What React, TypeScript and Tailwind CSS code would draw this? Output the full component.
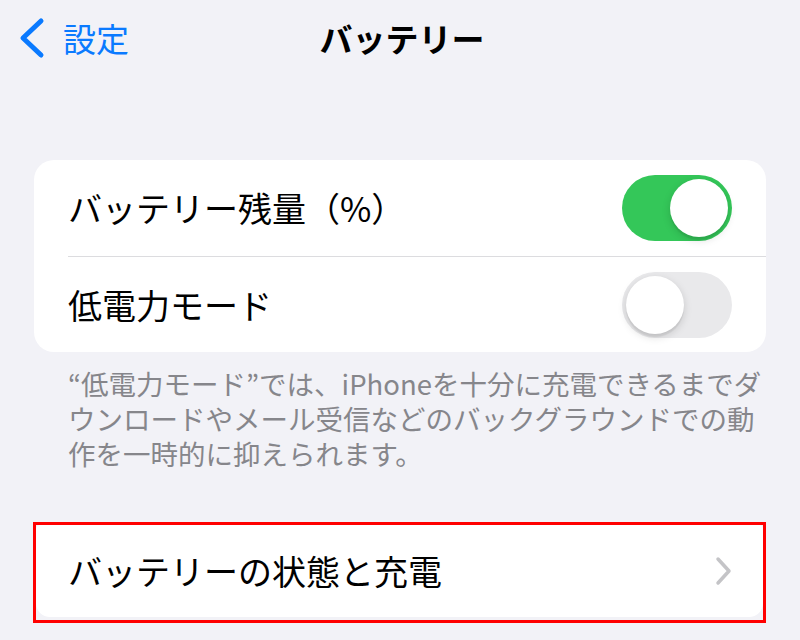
import React from "react";

const font = { fontFamily: '"Noto Sans CJK JP", "Noto Sans", sans-serif' };

function Toggle({ on }: { on: boolean }) {
  return (
    <div
      className={`relative w-[110px] h-[66px] rounded-full ${on ? "bg-[#34c759]" : "bg-[#e9e9eb]"}`}
    >
      <div
        className={`absolute top-[4px] w-[58px] h-[58px] rounded-full bg-white shadow-[0_3px_8px_rgba(0,0,0,0.15),0_3px_1px_rgba(0,0,0,0.06)] ${on ? "left-[48px]" : "left-[4px]"}`}
      />
    </div>
  );
}

export default function App() {
  return (
    <div className="w-[800px] h-[640px] bg-[#f2f2f7] overflow-hidden text-black" style={font}>
      {/* Nav bar */}
      <div className="grid grid-cols-[1fr_auto_1fr] items-center h-[76px]">
        <div className="flex items-center pl-[14px]">
          <svg width="32" height="44" viewBox="0 0 32 44" className="shrink-0">
            <path d="M27 5 L9 22 L27 39" fill="none" stroke="#0a7aff" strokeWidth="5" strokeLinecap="round" strokeLinejoin="round" />
          </svg>
          <span className="ml-[17px] text-[33px] leading-none text-[#0a7aff]">設定</span>
        </div>
        <div className="text-[33px] font-bold leading-none pl-[4px]">バッテリー</div>
        <div />
      </div>

      {/* Card 1 */}
      <div className="mt-[84px] mx-[34px] rounded-[20px] bg-white overflow-hidden">
        <div className="flex items-center justify-between h-[96px] pl-[34px] pr-[34px]">
          <span className="text-[34px] leading-none">バッテリー残量（%）</span>
          <Toggle on={true} />
        </div>
        <div className="ml-[34px] h-px bg-[#dcdcdf]" />
        <div className="flex items-center justify-between h-[95px] pl-[34px] pr-[34px]">
          <span className="text-[34px] leading-none">低電力モード</span>
          <Toggle on={false} />
        </div>
      </div>

      {/* Footer */}
      <div className="mx-[34px] pl-[34px] pt-[14px] text-[27.5px] leading-[35px] text-[#86868b] flex flex-col">
        <span>“低電力モード”では、iPhoneを十分に充電できるまでダ</span>
        <span>ウンロードやメール受信などのバックグラウンドでの動</span>
        <span>作を一時的に抑えられます。</span>
      </div>

      {/* Card 2 with red highlight */}
      <div className="mt-[51px] ml-[33px] w-[733px] h-[101px] border-[3px] border-[#ff0000] pb-[3px]">
        <div className="h-full bg-white rounded-t-[4px] rounded-b-[14px] flex items-center justify-between pl-[32px] pr-[30px]">
          <span className="text-[34px] leading-none">バッテリーの状態と充電</span>
          <svg width="20" height="30" viewBox="0 0 20 30">
            <path d="M5 3 L16 15 L5 27" fill="none" stroke="#c4c4c7" strokeWidth="3.5" strokeLinecap="round" strokeLinejoin="round" />
          </svg>
        </div>
      </div>
    </div>
  );
}
